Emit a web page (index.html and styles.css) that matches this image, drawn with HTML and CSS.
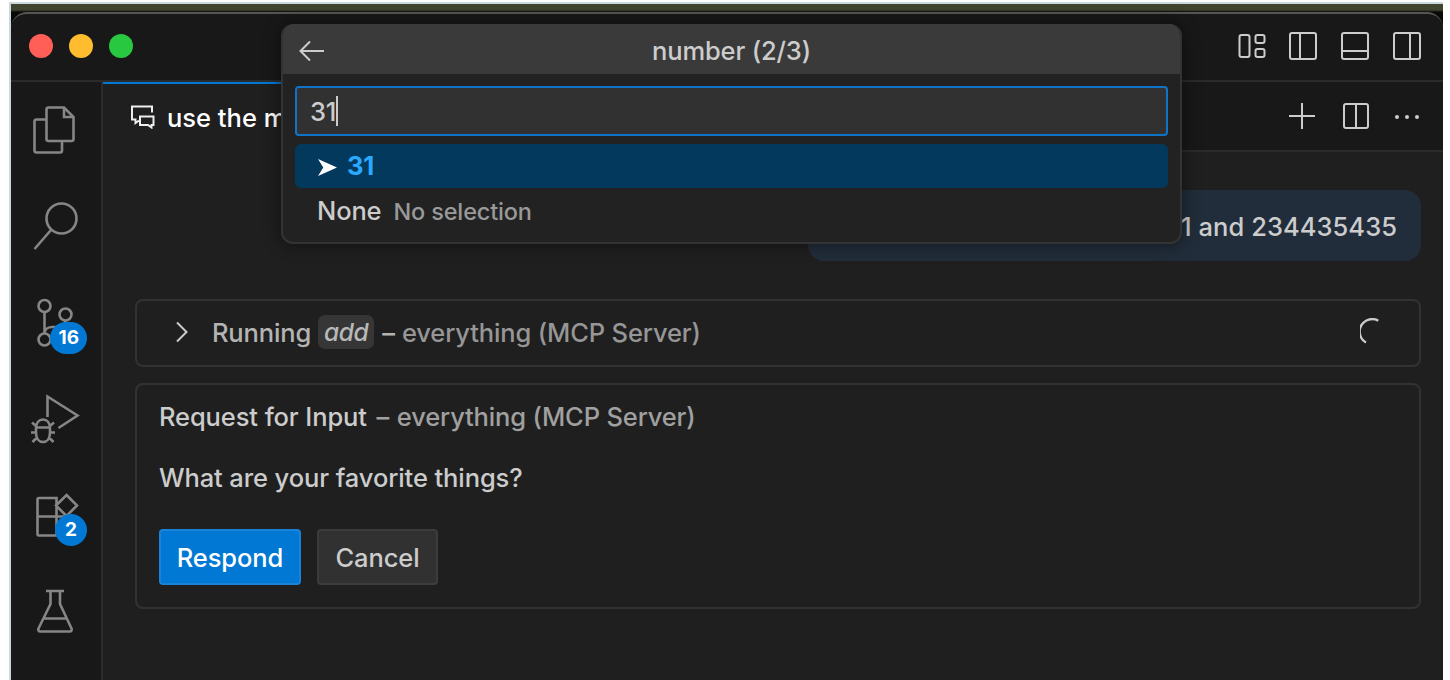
FILE: index.html
```
<!DOCTYPE html>
<html lang="en">
    <head>
        <meta charset="utf-8" />
        <title>number (2/3)</title>
        <link rel="stylesheet" href="styles.css">
    </head>
    <body>
        <div class="desktop">
            <div class="window">
                <header class="titlebar">
                    <div class="traffic">
                        <span class="light red"></span>
                        <span class="light yellow"></span>
                        <span class="light green"></span>
                    </div>
                    <div class="actions">
                        <svg viewBox="0 0 32 32"><rect x="4.5" y="5" width="10" height="22" rx="2"/><rect x="20.5" y="5" width="9" height="8" rx="2"/><rect x="20.5" y="19" width="9" height="8" rx="2"/></svg>
                        <svg viewBox="0 0 32 32"><rect x="3" y="3" width="26" height="26" rx="2"/><path d="M13 3v26"/></svg>
                        <svg viewBox="0 0 32 32"><rect x="3" y="3" width="26" height="26" rx="2"/><path d="M3 21h26"/></svg>
                        <svg viewBox="0 0 32 32"><rect x="3" y="3" width="26" height="26" rx="2"/><path d="M19 3v26"/></svg>
                    </div>
                </header>
                <div class="workbench">
                    <nav class="activity">
                        <div class="item">
                            <svg viewBox="0 0 48 48"><path d="M17.5 1.5H33l9.5 9.5v22a2 2 0 0 1-2 2h-23a2 2 0 0 1-2-2v-29.500a2 2 0 0 1 2-2zM33 1.500V11h9.500M15.500 13.500h-10a2 2 0 0 0-2 2v29a2 2 0 0 0 2 2H29a2 2 0 0 0 2-2V35"/></svg>
                        </div>
                        <div class="item">
                            <svg viewBox="0 0 48 48"><circle cx="30.500" cy="16.500" r="15"/><path d="M20 28L3.500 47"/></svg>
                        </div>
                        <div class="item">
                            <svg viewBox="0 0 48 48"><circle cx="13.500" cy="8" r="6"/><circle cx="34.500" cy="16.500" r="6"/><circle cx="13.500" cy="41.500" r="6"/><path d="M13.500 14v21.500M34.500 22.500c0 5-4 6.500-8 6.500h-5c-4 0-8 2-8 6.500"/></svg>
                            <span class="badge">16</span>
                        </div>
                        <div class="item">
                            <svg viewBox="0 0 48 48"><path d="M16.500 23V2.500L46.500 21.500 27.500 34"/><path d="M5 34.500c0-6 3-9 7-9s7 3 7 9v4c0 6-3 9.500-7 9.500s-7-3.500-7-9.500zM5 33.500h14M5 32l-4-3.500M19 32l4-3.500M5 38.500H0M19 38.500h5M6 43.500L1.500 48M18 43.500l4.500 4.500"/></svg>
                        </div>
                        <div class="item">
                            <svg viewBox="0 0 48 48"><path d="M8 8h17.500v37.500H8a1.500 1.500 0 0 1-1.500-1.500V9.500A1.500 1.500 0 0 1 8 8zM6.500 26.500h36.500a1.500 1.500 0 0 1 1.500 1.500v16a1.500 1.500 0 0 1-1.500 1.500H25.500M35.500 5L46 15.500 35.500 26 25 15.500z"/></svg>
                            <span class="badge">2</span>
                        </div>
                        <div class="item">
                            <svg viewBox="0 0 48 48"><path d="M15 5h18M19.500 5v13L7.500 42.500a2 2 0 0 0 1.800 3h29.400a2 2 0 0 0 1.800-3L29 18V5M13 32.500h22.500"/></svg>
                        </div>
                    </nav>
                    <main class="editor">
                        <div class="tabs">
                            <div class="tab">
                                <svg viewBox="0 0 24 24"><path d="M8 15.500L4.500 18v-3.500H1v-13h20v6M9 11.500h13.500v8.500h-2v2.500l-3.500-2.500H9z"/></svg>
                                use the m
                            </div>
                            <div class="actions">
                                <svg viewBox="0 0 32 32"><path d="M15 3v26M2 16h26"/></svg>
                                <svg viewBox="0 0 32 32"><rect x="5" y="4" width="24" height="24" rx="2"/><path d="M17 4v24"/></svg>
                                <svg viewBox="0 0 32 32" class="dots"><circle cx="6" cy="17" r="2"/><circle cx="16" cy="17" r="2"/><circle cx="26" cy="17" r="2"/></svg>
                            </div>
                        </div>
                        <div class="chat">
                            <div class="message">1 and 234435435</div>
                            <div class="card running">
                                <svg class="chevron" viewBox="0 0 12 22"><path d="M1 1.500L10.500 11 1 20.500"/></svg>
                                <span class="label">Running</span>
                                <code>add</code>
                                <span class="label">–</span>
                                <span class="server">everything (MCP Server)</span>
                                <svg class="spinner" viewBox="0 0 28 28"><path d="M18.300 2.700A12 12 0 0 0 6 24.500"/></svg>
                            </div>
                            <div class="card request">
                                <p>Request for Input <span class="server"><i>–</i> everything (MCP Server)</span></p>
                                <p class="question">What are your favorite things?</p>
                                <div class="buttons">
                                    <button class="primary">Respond</button>
                                    <button>Cancel</button>
                                </div>
                            </div>
                        </div>
                    </main>
                </div>
            </div>
        </div>
        <div class="quick-input">
            <div class="quick-title">
                <svg viewBox="0 0 26 22"><path d="M25 11H1.500M11 1.500L1.500 11l9.500 9.500"/></svg>
                <span>number (2/3)</span>
            </div>
            <div class="quick-box">31<span class="caret"></span></div>
            <div class="row selected">
                <svg viewBox="0 0 18 16"><path d="M0 0l18 8-18 8 5-8z"/></svg>
                <b>31</b>
            </div>
            <div class="row">None <small>No selection</small></div>
        </div>
    </body>
</html>
```
FILE: styles.css
```
* {
    margin: 0;
    padding: 0;
    box-sizing: border-box;
}
body {
    height: 680px;
    padding: 2px 7px 0 9px;
    overflow: hidden;
    background-color: #fff;
    color: #ccc;
    font-family: Inter, "Liberation Sans", sans-serif;
    font-size: 25.5px;
    font-weight: 500;
    letter-spacing: -0.15px;
}
svg {
    flex: none;
    fill: none;
    stroke: #ccc;
    stroke-width: 2;
}
.desktop {
    height: 678px;
    padding-top: 8px;
    border-top: 2px solid #ccd8e0;
    border-left: 2px solid #ccd8e0;
    background: linear-gradient(#41442f 6px, #080a08 8px);
}
.window {
    display: flex;
    flex-direction: column;
    height: 668px;
    border-top: 2px solid #555;
    border-radius: 16px 16px 0 0;
    background-color: #181818;
}
.titlebar {
    display: flex;
    justify-content: space-between;
    height: 68px;
    padding: 0 20px 2px 18px;
    border-bottom: 2px solid #2b2b2b;
}
.traffic, .actions {
    display: flex;
    align-items: center;
}
.traffic {
    gap: 16px;
}
.actions {
    gap: 20px;
}
.actions svg {
    width: 32px;
    height: 32px;
}
.actions .dots {
    fill: #ccc;
    stroke: none;
}
.light {
    width: 24px;
    height: 24px;
    border-radius: 50%;
}
.red {
    background-color: #ff5f57;
}
.yellow {
    background-color: #febc2e;
}
.green {
    background-color: #28c840;
}
.workbench {
    display: flex;
    flex: 1;
}

/* activity bar */
.activity {
    width: 92px;
    border-right: 2px solid #2b2b2b;
}
.item {
    position: relative;
    display: flex;
    align-items: center;
    height: 96px;
    padding-left: 20px;
}
.item svg {
    width: 48px;
    height: 48px;
    overflow: visible;
    stroke: #868686;
    stroke-width: 2.6;
}
.badge {
    position: absolute;
    right: 14px;
    bottom: 16px;
    min-width: 32px;
    height: 32px;
    padding: 0 8px;
    border-radius: 16px;
    background-color: #0078d4;
    color: #fff;
    font-size: 19px;
    font-weight: 700;
    line-height: 32px;
    text-align: center;
    letter-spacing: 0;
}

/* editor */
.editor {
    flex: 1;
    background-color: #1f1f1f;
}
.tabs {
    display: flex;
    justify-content: space-between;
    height: 70px;
    padding-right: 20px;
    border-bottom: 2px solid #2b2b2b;
    background-color: #181818;
}
.tab {
    display: flex;
    align-items: center;
    gap: 12px;
    width: 400px;
    height: 70px;
    padding: 0 0 2px 28px;
    border-top: 2px solid #0078d4;
    background-color: #1f1f1f;
    color: #fff;
    letter-spacing: 0;
}
.tab svg {
    width: 24px;
    height: 24px;
    stroke: #eee;
}
.chat {
    display: flex;
    flex-direction: column;
    padding: 38px 22px 0 32px;
}
.message {
    align-self: flex-end;
    width: 613px;
    height: 71px;
    margin-bottom: 38px;
    padding-right: 24px;
    border-radius: 16px;
    background-color: #212d3a;
    line-height: 73px;
    text-align: right;
    letter-spacing: 0.05px;
}
.card {
    border: 2px solid #323232;
    border-radius: 8px;
}
.running {
    display: flex;
    align-items: center;
    height: 68px;
    margin-bottom: 16px;
    padding: 0 31px 2px 39px;
}
.chevron {
    width: 12px;
    height: 22px;
    margin-right: 24px;
}
.label {
    color: #b4b4b4;
}
code {
    margin: 0 8px 0 7px;
    padding: 0 6px;
    border-radius: 7px;
    background-color: #363636;
    color: #b8b8b8;
    font-family: Inter, sans-serif;
    font-size: 24.5px;
    font-style: italic;
    font-feature-settings: "cv11";
    letter-spacing: -0.4px;
    line-height: 34px;
}
.server {
    color: #a0a0a0;
}
.running .server {
    margin-left: 7px;
    color: #969696;
}
.spinner {
    width: 28px;
    height: 28px;
    margin-left: auto;
    stroke-width: 2.4;
}
.request {
    height: 226px;
    padding: 16px 22px;
    line-height: 32px;
    letter-spacing: -0.1px;
}
.request .server {
    letter-spacing: -0.15px;
}
.request i {
    margin: 0 1px 0 3px;
    font-style: normal;
}
.question {
    margin-top: 29px;
}
.buttons {
    display: flex;
    gap: 16px;
    margin-top: 35px;
}
button {
    width: 121px;
    height: 56px;
    padding-top: 2px;
    border: 2px solid #3c3c3c;
    border-radius: 4px;
    background-color: #313131;
    color: #ccc;
    font: inherit;
    letter-spacing: inherit;
}
.primary {
    width: 142px;
    border-color: #1a83d8;
    background-color: #0078d4;
    color: #fff;
}

/* quick input, floats over the window */
.quick-input {
    position: absolute;
    top: 24px;
    left: 281px;
    width: 901px;
    height: 220px;
    overflow: hidden;
    border: 2px solid #333;
    border-top: 0;
    border-radius: 12px;
    background-color: #222;
    box-shadow: 0 0 16px 2px rgba(0, 0, 0, 0.4);
}
.quick-title {
    display: flex;
    align-items: center;
    height: 50px;
    padding: 3px 16px 0;
    background-color: #3a3a3a;
}
.quick-title svg {
    width: 26px;
    height: 22px;
}
.quick-title span {
    flex: 1;
    padding-right: 26px;
    text-align: center;
}
.quick-box {
    display: flex;
    align-items: center;
    height: 50px;
    margin: 12px 12px 8px;
    padding: 0 13px;
    border: 2px solid #0f74c8;
    border-radius: 4px;
    background-color: #313131;
}
.caret {
    width: 2px;
    height: 30px;
    background-color: #ccc;
}
.row {
    display: flex;
    align-items: baseline;
    gap: 12px;
    height: 44px;
    margin: 0 12px;
    padding: 0 22px;
    border-radius: 6px;
    line-height: 46px;
}
.selected {
    align-items: center;
    gap: 10px;
    padding-left: 23px;
    background-color: #04395e;
    color: #2aaaff;
}
.row svg {
    width: 19px;
    height: 17px;
    margin-top: 2px;
    fill: #fff;
    stroke: none;
}
small {
    color: #999;
    font-size: 23.5px;
}
```
